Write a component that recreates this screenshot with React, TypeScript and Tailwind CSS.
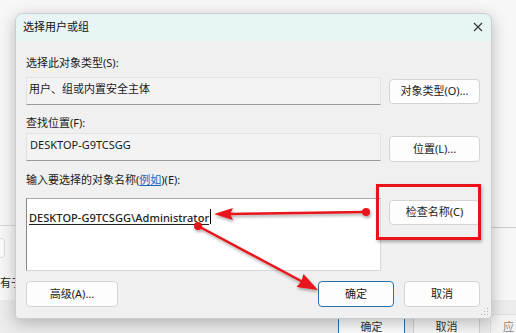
import React from 'react';

const font = { fontFamily: '"Noto Sans", "Noto Sans CJK SC", sans-serif' };

function Btn({ label, primary, className }: { label: string; primary?: boolean; className?: string }) {
  return (
    <div
      className={
        'flex items-center justify-center rounded-[4px] bg-[#fdfdfd] text-[11px] text-[#1a1a1a] ' +
        (primary ? 'border border-[#2a6fa8] ' : 'border border-[#d4d4d4] ') +
        (className ?? '')
      }
    >
      {label}
    </div>
  );
}

function Arrows() {
  return (
    <svg className="pointer-events-none absolute left-0 top-0" width="516" height="333" viewBox="0 0 516 333">
      <defs>
        <filter id="sh" x="-10%" y="-10%" width="120%" height="140%">
          <feDropShadow dx="1" dy="2" stdDeviation="1.5" floodColor="#000" floodOpacity="0.35" />
        </filter>
      </defs>
      <g filter="url(#sh)" fill="#e8141a" stroke="#e8141a">
        <line x1="366" y1="212" x2="230" y2="214" strokeWidth="2.5" />
        <circle cx="366" cy="212" r="4" stroke="none" />
        <polygon points="214,214 233,208 230,214 233,220" stroke="none" />
        <line x1="198" y1="226" x2="302" y2="281.5" strokeWidth="2.5" />
        <circle cx="198" cy="226" r="4" stroke="none" />
        <polygon points="318,290 296.5,287 301.5,281 303.5,274" stroke="none" />
      </g>
    </svg>
  );
}

export default function App() {
  return (
    <div className="relative h-[333px] w-[516px] overflow-hidden bg-[#f7f7f7]" style={font}>
      {/* window behind the dialog */}
      <div className="absolute left-0 top-[225px] h-px w-[20px] bg-[#d6d6d6]" />
      <div className="absolute left-[-20px] top-[238px] h-[20px] w-[25px] rounded-[4px] border border-[#dcdcdc] bg-[#fbfbfb]" />
      <div className="absolute left-0 top-[275px] text-[11px] text-[#222]">有子</div>
      <div className="absolute left-[492px] top-[227px] h-px w-[24px] bg-[#cfcfcf]" />
      <div className="absolute left-0 top-[300px] h-[33px] w-[516px] bg-[#ececec]">
        <div className="absolute left-[338px] top-[14px] flex h-[26px] w-[67px] items-center justify-center rounded-[4px] border border-[#2a6fa8] bg-[#fdfdfd] text-[11px] text-[#333]">确定</div>
        <div className="absolute left-[413px] top-[14px] flex h-[26px] w-[67px] items-center justify-center rounded-[4px] border border-[#d0d0d0] bg-[#f6f6f6] text-[11px] text-[#333]">取消</div>
        <div className="absolute left-[490px] top-[14px] flex h-[26px] w-[40px] items-center rounded-[4px] border border-[#e0e0e0] bg-[#f3f3f3] pl-[12px] text-[11px] text-[#888]">应</div>
      </div>

      {/* dialog window */}
      <div className="absolute left-[15px] top-[13px] flex h-[306px] w-[477px] flex-col overflow-hidden rounded-t-[8px] rounded-b-[4px] border border-[#c9cdcf] bg-[#f0f0f0] shadow-[0_4px_16px_rgba(0,0,0,0.25)]">
        <div className="flex h-[27px] shrink-0 items-center justify-between bg-[#e8f5f5] pl-[7px] pr-[8px] text-[11px] text-[#111]">
          <span>选择用户或组</span>
          <svg width="10" height="10" viewBox="0 0 10 10" className="mt-[-1px]">
            <path d="M1 1 L9 9 M9 1 L1 9" stroke="#333" strokeWidth="1.1" />
          </svg>
        </div>

        <div className="flex flex-1 flex-col pl-[10px] pr-[11px] text-[11px] text-[#1a1a1a]">
          <div className="mt-[15px] leading-[14px]">选择此对象类型(S):</div>
          <div className="mt-[7px] flex items-start gap-[8px]">
            <div className="h-[28px] w-[355px] border border-[#e2e2e2] border-b-[#9a9a9a] bg-[#f3f3f3] pl-[2px] pt-[4px] leading-[14px]">
              用户、组或内置安全主体
            </div>
            <Btn label="对象类型(O)..." className="mt-[2px] h-[25px] w-[91px]" />
          </div>

          <div className="mt-[11px] leading-[14px]">查找位置(F):</div>
          <div className="mt-[3px] flex items-start gap-[8px]">
            <div className="h-[28px] w-[355px] border border-[#e2e2e2] border-b-[#9a9a9a] bg-[#f3f3f3] pl-[3px] pt-[4px] leading-[14px]">
              DESKTOP-G9TCSGG
            </div>
            <Btn label="位置(L)..." className="mt-[3px] h-[26px] w-[91px]" />
          </div>

          <div className="mt-[11px] leading-[14px]">
            输入要选择的对象名称(<span className="text-[#2066b8] underline">例如</span>)(E):
          </div>
          <div className="mt-[11px] flex items-start gap-[8px]">
            <div className="h-[73px] w-[355px] border border-[#d8d8d8] border-l-[#8a8a8a] border-t-[#a8a8a8] bg-white pl-[2px] pt-[8px] leading-[14px]">
              <span className="font-medium tracking-[0.05px] text-[#222] underline underline-offset-2">DESKTOP-G9TCSGG\Administrator</span>
              <span className="ml-[1px] inline-block h-[15px] w-px translate-y-[2px] bg-black" />
            </div>
            <div className="relative">
              <Btn label="检查名称(C)" className="mt-[2px] h-[25px] w-[91px]" />
              <div className="absolute left-[-13px] top-[-14px] h-[56px] w-[105px] border-[3px] border-[#e8141a] shadow-[1px_2px_3px_rgba(0,0,0,0.3)]" />
            </div>
          </div>

          <div className="mt-[10px] flex items-center">
            <Btn label="高级(A)..." className="h-[26px] w-[92px]" />
            <div className="flex-1" />
            <Btn label="确定" primary className="h-[26px] w-[76px]" />
            <Btn label="取消" className="ml-[10px] h-[26px] w-[76px]" />
          </div>
        </div>
        <svg className="absolute bottom-[2px] right-[2px]" width="8" height="8" viewBox="0 0 8 8">
          <g fill="#b0b0b0">
            <rect x="6" y="0" width="1" height="1" />
            <rect x="3" y="3" width="1" height="1" />
            <rect x="6" y="3" width="1" height="1" />
            <rect x="0" y="6" width="1" height="1" />
            <rect x="3" y="6" width="1" height="1" />
            <rect x="6" y="6" width="1" height="1" />
          </g>
        </svg>
      </div>

      <Arrows />
    </div>
  );
}
